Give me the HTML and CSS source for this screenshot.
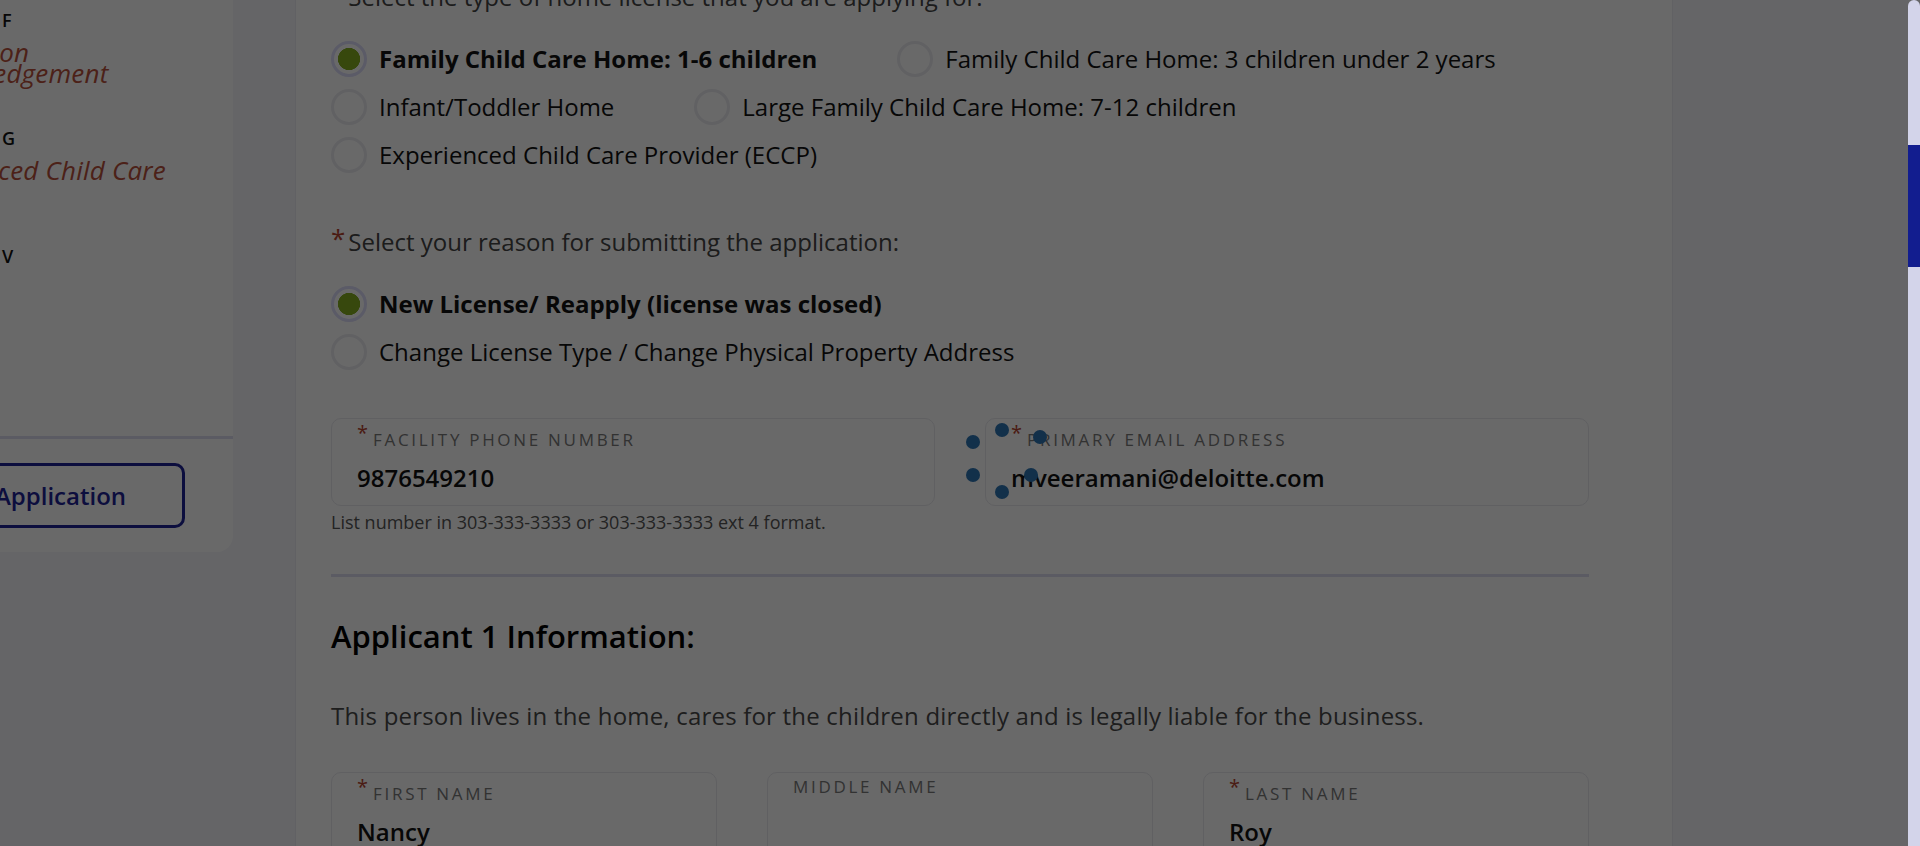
FILE: index.html
```html
<!DOCTYPE html>
<html lang="en">
<head>
<meta charset="utf-8">
<title>Family Child Care Home License Application</title>
<link rel="stylesheet" href="styles.css">
</head>
<body>
<div class="layout">
  <aside class="sidebar">
    <ol class="steps">
      <li class="step">
        <div class="step-title">Section F</div>
        <div class="step-name">Application Acknowledgement</div>
      </li>
      <li class="step">
        <div class="step-title">Section G</div>
        <div class="step-name">Experienced Child Care Home</div>
      </li>
      <li class="step">
        <div class="step-title">Section V</div>
        <div class="step-name">Review</div>
      </li>
    </ol>
    <div class="sidebar-footer">
      <button class="btn-outline" type="button">Save Application</button>
    </div>
  </aside>

  <main class="main-card">
    <p class="question"><span class="req">*</span>Select the type of home license that you are applying for:</p>
    <div class="radios">
      <label class="radio is-checked"><input type="radio" name="type" checked>Family Child Care Home: 1-6 children</label>
      <label class="radio"><input type="radio" name="type">Family Child Care Home: 3 children under 2 years</label>
      <label class="radio"><input type="radio" name="type">Infant/Toddler Home</label>
      <label class="radio"><input type="radio" name="type">Large Family Child Care Home: 7-12 children</label>
      <label class="radio"><input type="radio" name="type">Experienced Child Care Provider (ECCP)</label>
    </div>

    <p class="question"><span class="req">*</span>Select your reason for submitting the application:</p>
    <div class="radios stacked">
      <label class="radio is-checked"><input type="radio" name="reason" checked>New License/ Reapply (license was closed)</label>
      <label class="radio"><input type="radio" name="reason">Change License Type / Change Physical Property Address</label>
    </div>

    <div class="contact">
      <div class="field-row two">
        <div class="field-col">
          <div class="field">
            <label class="field-label" for="phone"><span class="req-sm">*</span>Facility Phone Number</label>
            <input class="field-input" id="phone" type="text" value="9876549210">
          </div>
          <p class="hint">List number in 303-333-3333 or 303-333-3333 ext 4 format.</p>
        </div>
        <div class="field-col">
          <div class="field">
            <label class="field-label" for="email"><span class="req-sm">*</span>Primary Email Address</label>
            <input class="field-input" id="email" type="text" value="mveeramani@deloitte.com">
          </div>
        </div>
      </div>
    </div>

    <h2 class="section-title">Applicant 1 Information:</h2>
    <p class="section-intro">This person lives in the home, cares for the children directly and is legally liable for the business.</p>

    <div class="field-row three">
      <div class="field">
        <label class="field-label" for="first"><span class="req-sm">*</span>First Name</label>
        <input class="field-input" id="first" type="text" value="Nancy">
      </div>
      <div class="field">
        <label class="field-label" for="middle">Middle Name</label>
        <input class="field-input" id="middle" type="text" value="">
      </div>
      <div class="field">
        <label class="field-label" for="last"><span class="req-sm">*</span>Last Name</label>
        <input class="field-input" id="last" type="text" value="Roy">
      </div>
    </div>
  </main>
</div>

<div class="backdrop"></div>
<div class="spinner" role="status" aria-label="Loading">
  <span class="spin-dot"></span><span class="spin-dot"></span><span class="spin-dot"></span>
  <span class="spin-dot"></span><span class="spin-dot"></span><span class="spin-dot"></span>
</div>
<div class="scrollbar"><div class="scrollbar-thumb"></div></div>
</body>
</html>
```

FILE: styles.css
```css
* { box-sizing: border-box; }

html, body { height: 100%; }

body {
  margin: 0;
  overflow: hidden;
  background: #f6f6fb;
  font-family: "Open Sans", "Noto Sans", sans-serif;
  color: #111;
}

.layout {
  display: flex;
  align-items: flex-start;
  gap: 62px;
  margin-left: -141px;
  margin-top: -60px;
}

/* ---------- Sidebar ---------- */
.sidebar {
  flex: 0 0 374px;
  background: #fff;
  border-radius: 0 0 16px 16px;
  padding-top: 68px;
}

.steps {
  list-style: none;
  margin: 0;
  padding: 0 48px 137px 39px;
}

.step + .step { margin-top: 42px; }

.step-title {
  font-size: 18px;
  line-height: 24px;
  font-weight: 600;
  letter-spacing: 3px;
  text-transform: uppercase;
  color: #111;
  white-space: nowrap;
}

.step-name {
  margin-top: 10px;
  font-size: 26px;
  line-height: 21px;
  font-style: italic;
  letter-spacing: 0.2px;
  color: #b8503c;
}

.sidebar-footer {
  border-top: 3px solid #dcdcf0;
  padding: 24px 48px 24px 39px;
}

.btn-outline {
  display: block;
  width: 100%;
  height: 65px;
  padding: 0 22px 0 0;
  border: 3px solid #1e2296;
  border-radius: 10px;
  background: transparent;
  color: #1e2296;
  font: 600 24px/1 "Open Sans", sans-serif;
  white-space: nowrap;
}

/* ---------- Main card ---------- */
.main-card {
  flex: 0 0 1378px;
  background: #fff;
  border: 1px solid #ececf2;
  padding: 40px 83px 200px 35px;
}

.question {
  margin: 0 0 28px;
  font-size: 24px;
  line-height: 32px;
  color: #444;
}

.req {
  color: #b5432f;
  font-size: 26px;
  line-height: 0;
  vertical-align: 3px;
  margin-right: 3px;
}

.radios {
  display: flex;
  flex-wrap: wrap;
  column-gap: 80px;
  row-gap: 12px;
  margin-bottom: 53px;
}

.radios.stacked {
  flex-direction: column;
  align-items: flex-start;
  margin-bottom: 48px;
}

.radio {
  display: flex;
  align-items: center;
  gap: 12px;
  font-size: 24px;
  line-height: 36px;
  color: #111;
  white-space: nowrap;
}

.radio.is-checked { font-weight: 700; }

.radio input {
  appearance: none;
  -webkit-appearance: none;
  flex: none;
  margin: 0;
  width: 36px;
  height: 36px;
  border: 3px solid #ebebf0;
  border-radius: 50%;
  background: #fff;
}

.radio input:checked {
  border-color: #dcdcfa;
  background: radial-gradient(circle closest-side, #86b020 72%, #fff 76%);
}

/* ---------- Fields ---------- */
.contact {
  padding-bottom: 40px;
  border-bottom: 3px solid #dcdcf0;
}

.field-row {
  display: grid;
  column-gap: 50px;
}

.field-row.two { grid-template-columns: 1fr 1fr; align-items: start; }
.field-row.three { grid-template-columns: repeat(3, 1fr); }

.field {
  border: 1px solid #e9e9ee;
  border-radius: 10px;
  padding: 4px 24px 13px 25px;
}

.field-label {
  display: block;
  font-size: 17px;
  line-height: 20px;
  letter-spacing: 2.7px;
  text-transform: uppercase;
  color: #7a7a7a;
}

.req-sm {
  color: #b5432f;
  font-size: 20px;
  line-height: 20px;
  vertical-align: 6px;
  margin-right: 5px;
  letter-spacing: 0;
}

.field-input {
  display: block;
  width: 100%;
  height: 30px;
  margin-top: 12px;
  padding: 0;
  border: 0;
  outline: none;
  background: transparent;
  font: 600 24px "Open Sans", sans-serif;
  color: #111;
}

.hint {
  margin: 4px 0 0;
  font-size: 18px;
  line-height: 24px;
  color: #555;
}

.section-title {
  margin: 39px 0 0;
  font-size: 31px;
  line-height: 40px;
  font-weight: 600;
  color: #000;
}

.section-intro {
  margin: 44px 0 40px;
  font-size: 24px;
  line-height: 32px;
  letter-spacing: 0.2px;
  color: #4a4a4a;
}

/* ---------- Modal backdrop + loader ---------- */
.backdrop {
  position: fixed;
  inset: 0;
  background: rgba(0, 0, 0, 0.59);
}

.spinner {
  position: fixed;
  left: 966px;
  top: 423px;
  width: 90px;
  height: 80px;
}

.spin-dot {
  position: absolute;
  width: 14px;
  height: 14px;
  border-radius: 50%;
  background: #12304a;
}

.spin-dot:nth-child(1) { left: 0;    top: 12px; }
.spin-dot:nth-child(2) { left: 0;    top: 45px; }
.spin-dot:nth-child(3) { left: 29px; top: 0; }
.spin-dot:nth-child(4) { left: 29px; top: 62px; }
.spin-dot:nth-child(5) { left: 67px; top: 7px; }
.spin-dot:nth-child(6) { left: 58px; top: 45px; }

/* ---------- Page scrollbar ---------- */
.scrollbar {
  position: fixed;
  top: 0;
  right: 0;
  width: 12px;
  height: 100%;
  background: #d3d4ea;
  border-radius: 6px 6px 0 0;
}

.scrollbar-thumb {
  margin-top: 145px;
  height: 122px;
  background: #121d8f;
}
```
